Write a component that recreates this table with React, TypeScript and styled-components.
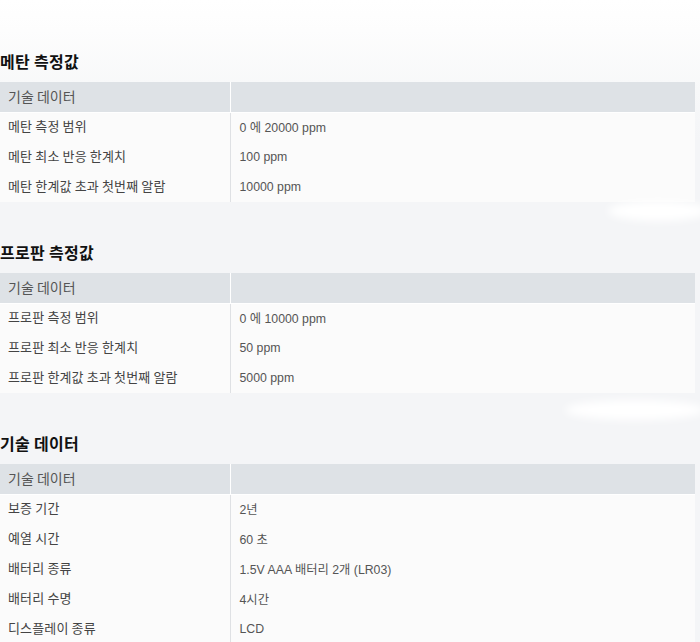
import styled, { createGlobalStyle } from 'styled-components';

const GlobalStyle = createGlobalStyle`
  html, body {
    margin: 0;
    padding: 0;
  }
  body {
    background: linear-gradient(#ffffff 0px, #fdfdfd 30px, #f7f8f9 90px, #f4f5f7 140px, #f4f5f7 100%);
    font-family: 'Noto Sans CJK KR', 'Liberation Sans', sans-serif;
    min-height: 642px;
    overflow: hidden;
  }
`;

const Page = styled.div`
  position: relative;
  padding-top: 40px;
  display: flex;
  flex-direction: column;
  gap: 29px;
`;

const Section = styled.section`
  display: flex;
  flex-direction: column;
`;

const Title = styled.h2`
  margin: 0;
  height: 42px;
  display: flex;
  align-items: center;
  font-family: 'Noto Sans CJK KR', sans-serif;
  font-size: 16px;
  font-weight: 700;
  color: #111;
  letter-spacing: 0.3px;
`;

const Table = styled.table`
  width: 695px;
  border-collapse: collapse;
  table-layout: fixed;
`;

const HeadCell = styled.th<{ $first?: boolean }>`
  height: 30px;
  padding: 0 0 2px 8px;
  background: #dee2e6;
  text-align: left;
  font-weight: 400;
  font-size: 14px;
  color: #555;
  border-bottom: 1px solid #ffffff;
  border-right: ${({ $first }) => ($first ? '1px solid #ffffff' : 'none')};
  width: ${({ $first }) => ($first ? '230px' : 'auto')};
  box-sizing: border-box;
`;

const Cell = styled.td<{ $label?: boolean }>`
  height: 30px;
  padding: 0 0 ${({ $label }) => ($label ? '3px' : '1px')} ${({ $label }) => ($label ? '8px' : '9px')};
  background: #fbfbfb;
  font-family: ${({ $label }) =>
    $label ? "'Noto Sans CJK KR', sans-serif" : "'Liberation Sans', 'Noto Sans CJK KR', sans-serif"};
  font-size: ${({ $label }) => ($label ? '13px' : '12.3px')};
  color: ${({ $label }) => ($label ? '#444' : '#555')};
  border-right: ${({ $label }) => ($label ? '1px solid #dfe1e4' : 'none')};
  letter-spacing: ${({ $label }) => ($label ? '0.15px' : '0')};
  vertical-align: middle;
  box-sizing: border-box;
`;

const Glow = styled.div<{ $top: number; $left: number; $w: number; $h: number }>`
  position: absolute;
  top: ${({ $top }) => $top}px;
  left: ${({ $left }) => $left}px;
  width: ${({ $w }) => $w}px;
  height: ${({ $h }) => $h}px;
  border-radius: 50%;
  background: #ffffff;
  filter: blur(4px);
  pointer-events: none;
`;

type Row = [string, string];

const sections: { title: string; rows: Row[] }[] = [
  {
    title: '메탄 측정값',
    rows: [
      ['메탄 측정 범위', '0 에 20000 ppm'],
      ['메탄 최소 반응 한계치', '100 ppm'],
      ['메탄 한계값 초과 첫번째 알람', '10000 ppm'],
    ],
  },
  {
    title: '프로판 측정값',
    rows: [
      ['프로판 측정 범위', '0 에 10000 ppm'],
      ['프로판 최소 반응 한계치', '50 ppm'],
      ['프로판 한계값 초과 첫번째 알람', '5000 ppm'],
    ],
  },
  {
    title: '기술 데이터',
    rows: [
      ['보증 기간', '2년'],
      ['예열 시간', '60 초'],
      ['배터리 종류', '1.5V AAA 배터리 2개 (LR03)'],
      ['배터리 수명', '4시간'],
      ['디스플레이 종류', 'LCD'],
    ],
  },
];

export default function App() {
  return (
    <>
      <GlobalStyle />
      <Page>
        {sections.map((s) => (
          <Section key={s.title}>
            <Title>{s.title}</Title>
            <Table>
              <thead>
                <tr>
                  <HeadCell $first>기술 데이터</HeadCell>
                  <HeadCell />
                </tr>
              </thead>
              <tbody>
                {s.rows.map(([label, value]) => (
                  <tr key={label}>
                    <Cell $label>{label}</Cell>
                    <Cell>{value}</Cell>
                  </tr>
                ))}
              </tbody>
            </Table>
          </Section>
        ))}
        <Glow $top={201} $left={608} $w={100} $h={20} />
        <Glow $top={400} $left={565} $w={140} $h={20} />
      </Page>
    </>
  );
}
